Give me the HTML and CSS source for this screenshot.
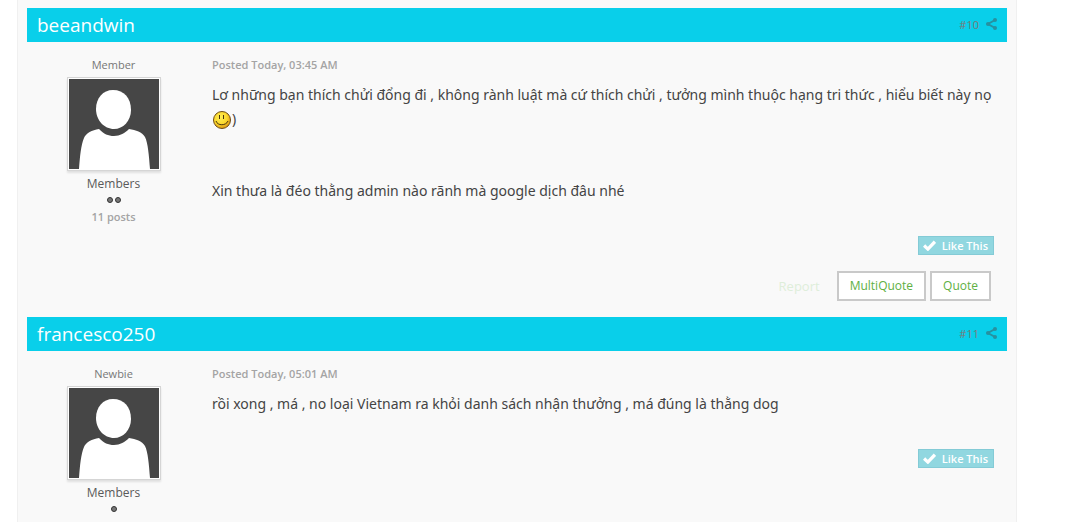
FILE: index.html
```
<!DOCTYPE html>
<html lang="vi">

<head>
    <meta charset="UTF-8">
    <meta name="viewport" content="width=device-width, initial-scale=1.0">
    <title>Forum Topic</title>

    <link rel="stylesheet" href="styles.css">
</head>

<body>
    <!-- Shared icons -->
    <svg class="sprite" aria-hidden="true">
        <symbol id="avatar" viewBox="0 0 90 90">
            <rect width="90" height="90" fill="#464646" />
            <path d="M44 11C55 11 62 19 62 31C62 42 54 50 45 50C35 50 27 41 27 30C27 19 34 11 44 11Z" fill="#fff" />
            <path d="M10 90C11 77 12 66 15 59C17 54 23 51 30 50C35 55 39 57 45 57C51 57 56 54 60 50C67 51 73 53 76 58C79 64 80 77 81 90Z" fill="#fff" />
        </symbol>
        <symbol id="share" viewBox="0 0 11 12">
            <path d="M9 2L2 6L9 10" fill="none" stroke="currentColor" stroke-width="2" />
            <circle cx="9" cy="2" r="2" fill="currentColor" />
            <circle cx="2" cy="6" r="2" fill="currentColor" />
            <circle cx="9" cy="10" r="2" fill="currentColor" />
        </symbol>
        <symbol id="check" viewBox="0 0 12 10">
            <path d="M1 5L4.500 8.300L11 1.500" fill="none" stroke="currentColor" stroke-width="3" />
        </symbol>
    </svg>

    <main class="topic">
        <!-- Post 10 -->
        <article class="post">
            <header class="post-header">
                <h3>beeandwin</h3>
                <a class="permalink" href="#post10">#10 <svg width="11" height="12" aria-hidden="true"><use href="#share" /></svg></a>
            </header>
            <div class="post-wrap" id="post10">
                <aside class="author">
                    <p class="author-title">Member</p>
                    <a class="avatar" href="#" aria-label="beeandwin"><svg width="90" height="90"><use href="#avatar" /></svg></a>
                    <p class="group">Members</p>
                    <p class="pips"><i></i><i></i></p>
                    <p class="post-count">11 posts</p>
                </aside>
                <div class="post-body">
                    <p class="posted">Posted Today, 03:45 AM</p>
                    <div class="entry">
                        <p>Lơ những bạn thích chửi đổng đi , không rành luật mà cứ thích chửi , tưởng mình thuộc hạng tri thức , hiểu biết này nọ
                            <svg class="smiley" width="20" height="20" viewBox="0 0 20 20" role="img" aria-label="smile">
                                <defs>
                                    <radialGradient id="face" cx="40%" cy="35%" r="65%">
                                        <stop offset="0" stop-color="#ffee55" />
                                        <stop offset="0.6" stop-color="#fbd82c" />
                                        <stop offset="1" stop-color="#e09a10" />
                                    </radialGradient>
                                </defs>
                                <circle cx="10" cy="10" r="8.500" fill="url(#face)" stroke="#6d4c17" />
                                <path d="M7.500 5V9M11.500 5V9M4 11C5.500 16 14 16 16 11" fill="none" stroke="#49330c" />
                            </svg>)</p>
                        <p class="spaced">Xin thưa là đéo thằng admin nào rãnh mà google dịch đâu nhé</p>
                    </div>
                    <div class="like-bar">
                        <button class="like" type="button"><svg width="13" height="11" aria-hidden="true"><use href="#check" /></svg>Like This</button>
                    </div>
                </div>
            </div>
            <div class="controls">
                <a class="report" href="#">Report</a>
                <a class="control" href="#">MultiQuote</a>
                <a class="control" href="#">Quote</a>
            </div>
        </article>

        <!-- Post 11 -->
        <article class="post">
            <header class="post-header">
                <h3>francesco250</h3>
                <a class="permalink" href="#post11">#11 <svg width="11" height="12" aria-hidden="true"><use href="#share" /></svg></a>
            </header>
            <div class="post-wrap" id="post11">
                <aside class="author">
                    <p class="author-title">Newbie</p>
                    <a class="avatar" href="#" aria-label="francesco250"><svg width="90" height="90"><use href="#avatar" /></svg></a>
                    <p class="group">Members</p>
                    <p class="pips"><i></i></p>
                </aside>
                <div class="post-body">
                    <p class="posted">Posted Today, 05:01 AM</p>
                    <div class="entry">
                        <p>rồi xong , má , no loại Vietnam ra khỏi danh sách nhận thưởng , má đúng là thằng dog</p>
                    </div>
                    <div class="like-bar">
                        <button class="like" type="button"><svg width="13" height="11" aria-hidden="true"><use href="#check" /></svg>Like This</button>
                    </div>
                </div>
            </div>
        </article>
    </main>
</body>

</html>
```
FILE: styles.css
```
* {
    box-sizing: border-box;
}

body {
    margin: 0;
    background-color: #fff;
    color: #444;
    font-family: "Open Sans", "Noto Sans", sans-serif;
    font-size: 12px;
}

h3, p {
    margin: 0;
}

a {
    text-decoration: none;
}

.sprite {
    display: none;
}

.topic {
    min-height: 100vh;
    margin: 0 70px 0 17px;
    padding: 8px 9px 0;
    border: solid #f0f0f0;
    border-width: 0 1px;
    background-color: #f9f9f9;
}

.post-header {
    display: flex;
    align-items: center;
    justify-content: space-between;
    height: 34px;
    padding: 0 10px;
    background-color: #09cfea;
}

.post-header h3 {
    color: #fff;
    font-size: 19px;
    font-weight: 400;
    line-height: 36px;
}

.permalink {
    display: flex;
    align-items: center;
    gap: 7px;
    padding-bottom: 2px;
    color: #7c7777;
    font-size: 11px;
}

.permalink svg {
    color: #2791a0;
}

.post-wrap {
    display: flex;
    gap: 12px;
}

.author {
    display: flex;
    flex: 0 0 173px;
    flex-direction: column;
    align-items: center;
    padding-top: 15px;
}

.author-title {
    color: #777;
    font-size: 11px;
    font-weight: 500;
    line-height: 16px;
}

.avatar {
    margin: 4px 0;
    padding: 1px;
    border: 1px solid #d5d5d5;
    background-color: #fff;
    box-shadow: 0 2px 2px rgba(0, 0, 0, 0.1);
}

.avatar svg {
    display: block;
}

.group {
    color: #5a5a5a;
    line-height: 18px;
}

.pips {
    display: flex;
    gap: 2px;
    padding: 4px 0;
}

.pips i {
    width: 6px;
    height: 6px;
    border: 1px solid #333;
    border-radius: 50%;
    background-color: #777;
}

.post-count {
    color: #a4a4a4;
    font-size: 11px;
    font-weight: 600;
    line-height: 20px;
}

.post-body {
    flex: 1;
    padding: 15px 13px 0 0;
}

.posted {
    color: #a4a4a4;
    font-size: 11px;
    font-weight: 600;
    line-height: 16px;
}

.entry {
    padding-top: 10px;
    color: #444;
    font-family: "Noto Sans", sans-serif;
    font-size: 14px;
    line-height: 24px;
}

.smiley {
    vertical-align: middle;
}

.spaced {
    margin-top: 48px;
}

.like-bar {
    display: flex;
    justify-content: flex-end;
    padding-top: 33px;
}

.like {
    display: flex;
    align-items: center;
    gap: 6px;
    height: 19px;
    padding: 0 5px 0 4px;
    border: 1px solid #84cbd6;
    background-color: #91d7e0;
    color: #fff;
    font-family: inherit;
    font-size: 11px;
    font-weight: 600;
    cursor: pointer;
}

.controls {
    display: flex;
    justify-content: flex-end;
    gap: 4px;
    padding: 16px 16px;
}

.control, .report {
    padding: 0 11px;
    border: 2px solid #c9c9c9;
    background-color: #fff;
    color: #60b044;
    line-height: 26px;
}

.report {
    border-color: transparent;
    background-color: transparent;
    color: #deeeda;
    font-size: 13px;
}
```
